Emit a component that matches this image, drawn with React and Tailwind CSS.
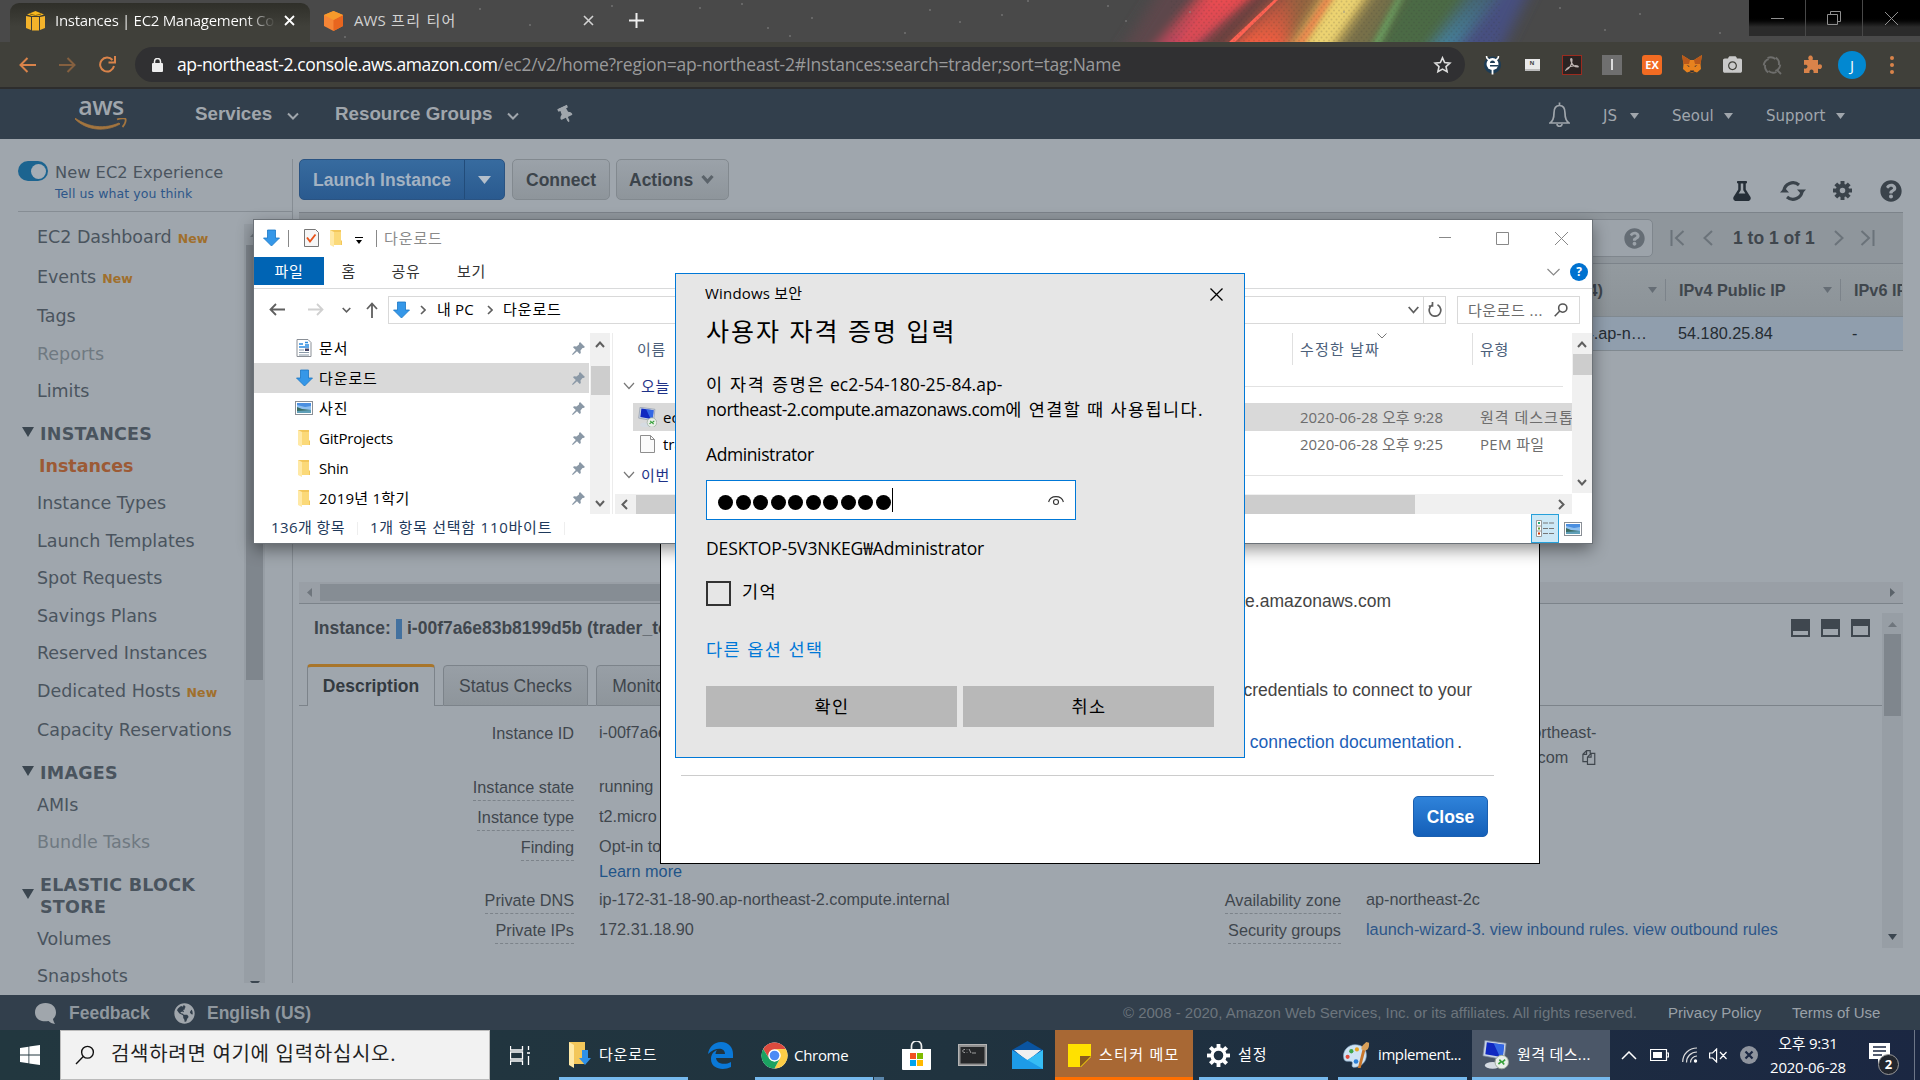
import React from "react";
import {
  FaThumbtack, FaQuestionCircle, FaFlask, FaGlobeAmericas, FaCamera,
} from "react-icons/fa";

const SEGOE = "font-['Open_Sans','Noto_Sans_CJK_KR',sans-serif]";
const ARIAL = "font-['Liberation_Sans',Arial,sans-serif]";
const VERDANA = "font-['DejaVu_Sans',Verdana,sans-serif]";

/* ---------- small drawings ---------- */
const Stroke = ({ d, w = 16, h = 16, c = "currentColor", s = 1.5, vb, className = "" }) => (
  <svg width={w} height={h} viewBox={vb || `0 0 ${w} ${h}`} fill="none" stroke={c} strokeWidth={s} className={`shrink-0 ${className}`}>
    <path d={d} />
  </svg>
);
const Tri = ({ dir = "down", w = 10, h = 6, c = "currentColor", className = "" }) => {
  const p = {
    down: `0,0 ${w},0 ${w / 2},${h}`,
    up: `0,${h} ${w},${h} ${w / 2},0`,
    left: `${w},0 ${w},${h} 0,${h / 2}`,
    right: `0,0 0,${h} ${w},${h / 2}`,
  }[dir];
  return (
    <svg width={w} height={h} className={`shrink-0 ${className}`}>
      <polygon points={p} fill={c} />
    </svg>
  );
};
const DownArrow = () => (
  <svg width="17" height="18" viewBox="0 0 17 18" className="shrink-0">
    <path d="M4.5 1h8v8h4L8.500 17 .5 9h4z" fill="#3597e8" stroke="#1b76c4" strokeWidth=".8" />
  </svg>
);
const Folder = () => (
  <svg width="14" height="18" viewBox="0 0 14 18" className="shrink-0">
    <path d="M1 1h11v10l1 1v4H3z" fill="#f3c75a" />
    <path d="M1 1l4 2v15l-4-2z" fill="#ffe9a6" />
    <path d="M5 3h7v13H5z" fill="#fbd978" />
  </svg>
);
const Picture = () => (
  <svg width="18" height="14" viewBox="0 0 18 14" className="shrink-0">
    <rect x=".5" y=".5" width="17" height="13" fill="#fff" stroke="#8a8f96" />
    <rect x="2" y="2" width="14" height="10" fill="#8fc0f0" />
    <path d="M2 2h14v3l-6 1-8-2z" fill="#4b8fe0" />
    <path d="M2 6l5 2 9 1v3H2z" fill="#3a6b62" />
    <path d="M2 10l14-1v3H2z" fill="#5f9fb8" />
  </svg>
);
const DocIcon = () => (
  <svg width="16" height="18" viewBox="0 0 16 18" className="shrink-0">
    <path d="M1 .5h11l3 3v14H1z" fill="#fff" stroke="#8a8f96" />
    <path d="M3 5h4M9 3.500h3M9 6h4M3 8h10" stroke="#2b8be0" strokeWidth="1.4" />
    <path d="M3 11h5M3 13.500h10M3 16h10" stroke="#8899a8" strokeWidth="1" />
    <rect x="9" y="9.500" width="4" height="2.500" fill="#446" />
  </svg>
);
const Pin = () => (
  <svg width="13" height="13" viewBox="0 0 13 13" className="shrink-0">
    <path d="M8 0l5 5-1.500 1-1 0-2 2.500.3 2.500-1 1L5 9.200.8 13 0 12.200 3.800 8 1 5.200l1-1 2.500.3L7 2.500 7 1.200z" fill="#8a98a6" />
  </svg>
);
const Remote = ({ w = 20 }) => (
  <svg width={w} height={w * 1.1} viewBox="0 0 28 30" className="shrink-0">
    <path d="M3 0l22 3-2 17L1 16z" fill="#c9d4e4" stroke="#7c889c" strokeWidth=".8" />
    <path d="M5 2l18 2.500-1.500 13L3.500 14.500z" fill="#1028c0" />
    <path d="M12 3l11 1.500-1.500 13-3-.5z" fill="#3f7cf0" opacity=".75" />
    <ellipse cx="11" cy="26" rx="8" ry="3.500" fill="#d5dbe2" />
    <circle cx="20.500" cy="22.500" r="7" fill="#e9efe9" stroke="#9aa79a" />
    <path d="M17 24.500l3-2.500-2-2M24 20l-3 2.500 2 2.500" fill="none" stroke="#37a13a" strokeWidth="1.700" />
  </svg>
);
const Magnifier = ({ s = 16, c, sw = 1.6 }) => (
  <svg width={s} height={s} viewBox="0 0 16 16" fill="none" stroke={c} strokeWidth={sw} className="shrink-0">
    <circle cx="10" cy="5.800" r="4.700" />
    <path d="M6.600 9.200L.8 15.200" />
  </svg>
);
const Gear = ({ s, c, teeth, hub }) => (
  <svg width={s} height={s} viewBox="-12 -12 24 24" className="shrink-0">
    {[0, 45, 90, 135, 180, 225, 270, 315].map((a) => <rect key={a} x={-teeth / 2} y="-12" width={teeth} height="6" fill={c} transform={`rotate(${a})`} />)}
    <circle r={(8.500 + hub) / 2} fill="none" stroke={c} strokeWidth={8.500 - hub} />
  </svg>
);

/* ---------- Chrome ---------- */
function Wallpaper() {
  return (
    <svg width="440" height="42" viewBox="0 0 440 42" className="absolute left-[1110px] top-0">
      <defs>
        <filter id="soft" x="-20%" width="140%" y="-50%" height="200%"><feGaussianBlur stdDeviation="8 2" /></filter>
        <filter id="soft2" x="-20%" width="140%" y="-50%" height="200%"><feGaussianBlur stdDeviation="3 1" /></filter>
        <pattern id="hex" width="5" height="6" patternUnits="userSpaceOnUse"><circle cx="1.500" cy="1.500" r="1" fill="#333" opacity=".16" /><circle cx="4" cy="4.500" r="1" fill="#333" opacity=".16" /></pattern>
        <linearGradient id="red" x1="0" y1="0" x2="0" y2="1"><stop offset="0" stopColor="#f04c4e" /><stop offset="1" stopColor="#b54660" /></linearGradient>
        <linearGradient id="org" x1="0" y1="0" x2="0" y2="1"><stop offset="0" stopColor="#9a5540" /><stop offset="1" stopColor="#ff5f42" /></linearGradient>
        <linearGradient id="blu" x1="0" y1="0" x2="0" y2="1"><stop offset="0" stopColor="#44606f" /><stop offset="1" stopColor="#4585a0" /></linearGradient>
      </defs>
      <g filter="url(#soft)">
        <polygon points="50,-10 110,-10 60,52 10,52" fill="#5d464b" />
        <polygon points="98,-10 146,-10 80,52 42,52" fill="url(#red)" />
        <polygon points="146,-10 174,-10 125,52 80,52" fill="#6b4340" />
        <polygon points="172,-10 188,-10 182,52 118,52" fill="url(#org)" />
        <polygon points="184,-10 220,-10 190,52 176,52" fill="#93653f" />
        <polygon points="220,-10 266,-10 222,52 182,52" fill="#e6c866" />
        <polygon points="260,-10 296,-10 262,52 220,52" fill="#787049" />
        <polygon points="292,-10 366,-10 322,52 260,52" fill="#4b6a44" />
        <polygon points="362,-10 398,-10 346,52 318,52" fill="url(#blu)" />
        <polygon points="392,-10 420,-10 390,52 342,52" fill="#474f80" />
      </g>
      <g filter="url(#soft2)">
        <polygon points="108,-4 140,-4 82,46 64,46" fill="#ee4c50" opacity=".5" />
        <polygon points="216,-4 224,-4 193,46 184,46" fill="#f57a48" opacity=".8" />
        <polygon points="228,-4 254,-4 219,46 200,46" fill="#f2da78" opacity=".6" />
        <polygon points="288,-4 293,-4 269,46 262,46" fill="#6fb068" opacity=".85" />
      </g>
      <polygon points="164,0 168,0 125,42 119,42" fill="#ff6252" />
      <rect x="60" width="330" height="42" fill="url(#hex)" />
    </svg>
  );
}

function TabStrip() {
  const stars = [[700, 8], [742, 4], [790, 36], [768, 28], [930, 10], [960, 22], [1002, 15], [905, 33], [812, 18], [1126, 21], [1108, 6], [1560, 8], [1605, 30], [1640, 14], [1720, 33], [480, 9], [530, 25], [612, 6], [345, 37], [1028, 1], [1344, 12], [1190, 12]];
  return (
    <div className={`relative h-[42px] bg-[#494949] flex shrink-0 ${SEGOE}`}>
      <Wallpaper />
      <svg width="1750" height="42" className="absolute left-0 top-0">
        {stars.map(([x, y], i) => <circle key={i} cx={x} cy={y} r=".8" fill="#8d8d8d" />)}
      </svg>
      <div className="relative ml-[10px] mt-[3px] w-[300px] h-[39px] rounded-t-[9px] bg-linear-to-b from-[#2f2f29] to-[#40403a] to-60% flex items-center pb-[4px] text-[15px] text-white">
        <svg width="19" height="20" viewBox="0 0 19 20" className="ml-[16px] shrink-0">
          <path d="M0 5l5 1v13l-5-2zM6 6h7v13.500H6zM14 6l5-1v12l-5 2z" fill="#f3b32b" />
          <path d="M1 3.500L9.500 0 18 3.500 13 5H6z" fill="#f6b71f" /><path d="M4 3l5.500 1.500L15 3" stroke="#8a6510" fill="none" />
        </svg>
        <span className="ml-[10px] w-[221px] shrink-0 overflow-hidden whitespace-nowrap tracking-[-0.3px] bg-linear-to-r from-white from-86% to-transparent bg-clip-text text-transparent">Instances | EC2 Management Co</span>
        <Stroke w={11} h={11} d="M1 1l9 9M10 1l-9 9" s={1.8} className="ml-[8px]" />
      </div>
      <div className="relative w-[300px] h-[42px] flex items-center pb-[1px] text-[15px] text-[#d2d2d2]">
        <svg width="19" height="20" viewBox="0 0 19 20" className="ml-[14px] shrink-0">
          <path d="M9.500 0L19 4v11l-9.500 5L0 15V4z" fill="#f58536" /><path d="M9.500 9L19 4v11l-9.500 5z" fill="#e8651f" /><path d="M9.500 0L19 4 9.500 9 0 4z" fill="#f79a2b" />
        </svg>
        <span className="ml-[11px] w-[229px] whitespace-nowrap tracking-[1.3px]"><span className="tracking-[0.1px]">AWS</span> 프리 티어</span>
        <Stroke w={11} h={11} d="M1 1l9 9M10 1l-9 9" s={1.6} />
      </div>
      <div className="relative w-[52px] flex items-center justify-center pb-[1px]"><Stroke w={15} h={15} d="M7.500 0v15M0 7.500h15" s={2} c="#eee" /></div>
      <div className="relative ml-auto h-[36px] w-[171px] flex bg-linear-to-b from-black from-45% to-[#2b2b2b] to-75% text-[#8f8f8f]">
        <div className="w-[57px] flex items-center justify-center border-r border-[#484848]"><Stroke w={13} h={13} d="M0 6.500h13" s={1} /></div>
        <div className="w-[57px] flex items-center justify-center border-r border-[#484848]"><Stroke w={14} h={14} d="M.5 3.500h10v10h-10zM3.500 3.500v-3h10v10h-3" s={1} /></div>
        <div className="w-[57px] flex items-center justify-center"><Stroke w={13} h={13} d="M0 0l13 13M13 0L0 13" s={1} /></div>
      </div>
    </div>
  );
}

function Toolbar() {
  const o = "#d9834a";
  const box = "w-[40px] shrink-0 flex items-center justify-center";
  return (
    <div className={`h-[47px] shrink-0 bg-[#40403a] border-b-2 border-[#2d2d2d] flex items-center pl-[8px] ${SEGOE}`}>
      <div className={box}><Stroke w={17} h={16} c={o} s={2} d="M17 8H1.500M8.500 1l-7 7 7 7" className="-ml-[2px]" /></div>
      <div className={box}><Stroke w={17} h={16} c="#85603f" s={2} d="M0 8h15.500M8.500 1l7 7-7 7" className="-ml-[2px]" /></div>
      <div className={box}>
        <Stroke w={18} h={17} c={o} s={2} d="M14.500 4A7 7 0 1 0 16 10M17 0v6.500h-6.500" className="-ml-[2px]" />
      </div>
      <div className="ml-[7px] w-[1330px] h-[35px] rounded-full bg-[#303032] flex items-center">
        <svg width="11" height="14" viewBox="0 0 11 14" className="ml-[17px] shrink-0"><rect y="5" width="11" height="9" rx="1" fill="#eee" /><path d="M2.500 5V3.500a3 3 0 0 1 6 0V5" fill="none" stroke="#eee" strokeWidth="1.500" /></svg>
        <span className="ml-[14px] w-[1256px] pb-[1px] shrink-0 whitespace-nowrap text-[17.5px] leading-[24px] tracking-[-0.21px] text-[#9a9a9b]">
          <span className="text-white tracking-[-0.37px]">ap-northeast-2.console.aws.amazon.com</span>/ec2/v2/home?region=ap-northeast-2#Instances:search=trader;sort=tag:Name
        </span>
        <Stroke w={19} h={18} vb="0 0 20 20" s={1.8} c="#ddd" d="M10 2l2.400 5.300 5.800.6-4.300 3.900 1.200 5.700-5.100-2.900-5.100 2.900 1.200-5.700L1.800 7.900l5.800-.6z" />
      </div>
      <div className="ml-[7px] flex">
        <div className={box}><svg width="19" height="20" viewBox="0 0 19 20"><circle cx="9.500" cy="10" r="8.500" fill="#1d3c55" /><path d="M3.500 1c0 2 1 3.500 3 4M15.500 1c0 2-1 3.500-3 4" fill="none" stroke="#fff" strokeWidth="1.500" /><circle cx="9.500" cy="9" r="6" fill="#fff" /><path d="M7 8a2.500 2.500 0 0 1 5 0zM7 10h8.500v1.500H7z" fill="#1d3c55" /><path d="M9.500 14v5.500" stroke="#fff" strokeWidth="1.800" /></svg></div>
        <div className={box}><div className="w-[15px] h-[12px] bg-[#e9e9e9] border-b-2 border-[#bbb] text-[6px] leading-[9px] font-bold text-center text-[#444]">N</div></div>
        <div className={box}><div className="w-[20px] h-[20px] bg-[#2b2322] border border-[#9c2b1f] flex items-center justify-center"><Stroke w={14} h={14} c="#bfb5b3" s={1.2} d="M1 12c4-2 6-6 6-10 0-2-2-2-1 1 1 4 4 6 7 6 1-1-2-2-5-1-3 .5-6 2-7 4z" /></div></div>
        <div className={box}><div className="w-[20px] h-[20px] bg-[#6f6f6f] flex items-center justify-center"><div className="w-[2px] h-[11px] bg-[#ddd]" /></div></div>
        <div className={box}><div className="w-[20px] h-[20px] rounded-[3px] bg-[#f26b22] text-white text-[11px] leading-[20px] font-bold text-center">EX</div></div>
        <div className={box}><svg width="20" height="19" viewBox="0 0 20 19"><path d="M0 0l8 5h4l8-5-1.500 9 .5 5-4 3.500-3-1-1 1.500H9l-1-1.500-3 1L1 14l.5-5z" fill="#e8821e" /><path d="M0 0l8 5-1 4-5.500 0zM20 0l-8 5 1 4 5.500 0z" fill="#b9581a" /><path d="M8 15.500h4l-.5 2h-3z" fill="#2b2b33" /><path d="M4.500 10l3 1-.5 1zM15.500 10l-3 1 .5 1z" fill="#33323a" /></svg></div>
        <div className={box}><FaCamera size={19} color="#c9c9c9" /></div>
        <div className={box}><svg width="20" height="20" viewBox="-10 -10 20 20" fill="none" stroke="#6e6e6c" strokeWidth="1.900">{[0, 60, 120, 180, 240, 300].map((a) => <path key={a} d="M-4.500-7C-1-8.500 3-7.500 5-4" transform={`rotate(${a})`} strokeDasharray="8.500 4" />)}<path d="M5 5l4 4" /></svg></div>
        <div className={box}><svg width="19" height="19" viewBox="0 0 19 19"><path d="M1 5h5c-1.500-2-.5-4.500 1.500-4.500S10.500 3 9.500 5H15v5c2-1.500 4-.5 4 1.500s-2 3.500-4 2V18h-4.500c.5-2-.5-3.500-2-3.500S6 16 6.500 18H1v-4.500c2 .5 3.500-.5 3.500-2S3 9.500 1 10z" fill="#d9834a" /></svg></div>
        <div className={box}><div className="w-[28px] h-[28px] rounded-full bg-[#0288d1] text-white text-[15px] leading-[28px] text-center">J</div></div>
        <div className={`${box} flex-col gap-[3px]`}>{[0, 1, 2].map((i) => <div key={i} className="w-[4px] h-[4px] rounded-full bg-[#d9834a]" />)}</div>
      </div>
    </div>
  );
}

/* ---------- AWS console ---------- */
function AwsHeader() {
  return (
    <div className={`h-[50px] shrink-0 bg-[#323f4c] flex items-center text-[#a0a6ac] ${ARIAL}`}>
      <div className="ml-[75px] w-[52px] h-[34px] flex flex-col items-center">
        <span className="h-[22px] leading-[16px] text-[25px] tracking-[-0.5px] font-['Open_Sans',sans-serif] font-semibold">aws</span>
        <svg width="52" height="13" viewBox="0 0 52 13" className="shrink-0"><path d="M0 0c14 10 30 11 44 5l1 1C31 14 12 13 0 1z" fill="#a3753f" stroke="#a3753f" strokeWidth=".8" /><path d="M42 1.500c4-1.500 8-1.500 8.500-.5s0 5-3 8" fill="none" stroke="#a3753f" strokeWidth="1.800" /></svg>
      </div>
      <span className="ml-[68px] w-[78px] text-[18.75px] font-bold whitespace-nowrap">Services</span>
      <Stroke w={12} h={8} d="M1 1.500l5 5 5-5" s={2} className="ml-[14px] mt-[4px]" />
      <span className="ml-[36px] w-[158px] text-[18.75px] font-bold whitespace-nowrap">Resource Groups</span>
      <Stroke w={12} h={8} d="M1 1.500l5 5 5-5" s={2} className="ml-[14px] mt-[4px]" />
      <FaThumbtack size={17} className="ml-[38px] -rotate-[25deg] shrink-0" />
      <div className={`ml-auto flex items-center pt-[4px] text-[15px] ${VERDANA}`}>
        <svg width="21" height="25" viewBox="0 0 21 25" fill="none" stroke="currentColor" strokeWidth="1.700" className="shrink-0 -mt-[3px]"><path d="M1 21c3-2 4-4.500 4-10C5 6 7 3.500 10.500 3.500S16 6 16 11c0 5.500 1 8 4 10zM10.500 3.500V.5M8 22a2.500 2.300 0 0 0 5 0" /></svg>
        <span className="ml-[33px] w-[19px]">JS</span><Tri w={9} h={6} className="ml-[8px]" />
        <span className="ml-[33px] w-[44px]">Seoul</span><Tri w={9} h={6} className="ml-[8px]" />
        <span className="ml-[33px] w-[62px]">Support</span><Tri w={9} h={6} className="ml-[8px] mr-[75px]" />
      </div>
    </div>
  );
}

const NAV = [
  ["EC2 Dashboard", "mt-[13px]", "new"], ["Events", "mt-[16px]", "new"], ["Tags", "mt-[15px]"], ["Reports", "mt-[14px]", "dim"], ["Limits", "mt-[13px]"],
  ["INSTANCES", "mt-[19px]", "head"], ["Instances", "mt-[8px]", "active"], ["Instance Types", "mt-[13px]"], ["Launch Templates", "mt-[14px]"],
  ["Spot Requests", "mt-[13px]"], ["Savings Plans", "mt-[14px]"], ["Reserved Instances", "mt-[13px]"], ["Dedicated Hosts", "mt-[14px]", "new"],
  ["Capacity Reservations", "mt-[15px]"], ["IMAGES", "mt-[19px]", "head"], ["AMIs", "mt-[8px]"], ["Bundle Tasks", "mt-[13px]", "dim"],
  ["ELASTIC BLOCK STORE", "mt-[20px]", "head2"], ["Volumes", "mt-[9px]"], ["Snapshots", "mt-[13px]"],
];

function Sidebar() {
  return (
    <div className={`w-[293px] h-[844px] shrink-0 flex flex-col overflow-hidden text-[#4a545e] ${VERDANA}`}>
      <div className="mt-[20px] h-[53px] border-r border-[#868d94] flex flex-col">
        <div className="ml-[18px] h-[53px] border-b border-[#868d94] flex">
          <div className="mt-[2px] w-[30px] h-[20px] rounded-full bg-[#1c6490] flex items-center justify-end pr-[2px]"><div className="w-[15px] h-[15px] rounded-full bg-[#a5adb5]" /></div>
          <div className="ml-[7px] whitespace-nowrap">
            <div className="h-[26px] leading-[27px] text-[16.25px]">New EC2 Experience</div>
            <div className="h-[18px] leading-[17px] text-[12.5px] tracking-[0.08px] text-[#2d5689]">Tell us what you think</div>
          </div>
        </div>
      </div>
      <div className="flex-1 min-h-0 border-r border-[#868d94] flex">
        <div className="w-[244px] flex flex-col overflow-hidden whitespace-nowrap text-[17.5px]">
          {NAV.map(([t, mt, k]) => {
            if (k === "head" || k === "head2")
              return (
                <div key={t} className={`${mt} shrink-0 flex items-center pl-[22px] font-bold ${k === "head" ? "h-[24px]" : "h-[44px]"}`}>
                  <Tri w={12} h={10} c="#3b4650" className="mb-[4px]" />
                  <span className="ml-[6px] w-[180px] whitespace-normal leading-[22px] tracking-[0.25px]">{t}</span>
                </div>
              );
            const c = k === "active" ? "font-bold text-[#9c5a35] pl-[39px]" : k === "dim" ? "text-[#6f7981] pl-[37px]" : "pl-[37px]";
            return (
              <div key={t} className={`${mt} shrink-0 h-[24px] leading-[24px] tracking-[-0.02px] ${c}`}>
                {t}{k === "new" && <span className="ml-[6px] text-[12.5px] font-bold tracking-[0.1px] text-[#a06f2c]">New</span>}
              </div>
            );
          })}
        </div>
        <div className="mt-[12px] w-[21px] bg-[#979ea5] flex flex-col items-center overflow-hidden">
          <Tri dir="up" w={9} h={5} c="#6f767d" className="mt-[8px]" />
          <div className="mt-[8px] w-[17px] h-[435px] shrink-0 bg-[#7f868d]" />
          <Tri dir="down" w={10} h={6} c="#3b4650" className="mt-[301px]" />
        </div>
      </div>
    </div>
  );
}

const greyBtn = "border border-[#82898f] bg-linear-to-b from-[#9ba2a9] to-[#8e959b] rounded-[5px] text-[#3c444b] flex items-center";

function Detail({ label, value, dash = true, lw, link, className = "" }) {
  return (
    <div className={`flex ${className}`}>
      <div className={`${lw} flex justify-end`}>
        <span className={`h-[27px] leading-[26px] ${dash ? "border-b border-dashed border-[#7c838a]" : ""}`}>{label}</span>
      </div>
      <div className={`ml-[25px] whitespace-nowrap leading-[25px] ${link ? "text-[#2d5689]" : ""}`}>{value}</div>
    </div>
  );
}

function PanelIcon({ inner }) {
  return <div className="w-[19px] h-[18px] bg-[#3f474f] flex items-end p-[2px]"><div className={`w-[15px] bg-[#9fa6ad] ${inner}`} /></div>;
}

function Main() {
  return (
    <div className={`ml-[6px] w-[1604px] flex flex-col ${ARIAL} text-[17.5px] text-[#3f464d]`}>
      <div className="mt-[20px] h-[53px] flex">
        <div className="w-[206px] h-[41px] rounded-[5px] border border-[#2a5382] bg-linear-to-b from-[#376b9f] to-[#2a5a8f] flex font-bold text-[#a3b2c2]">
          <div className="w-[165px] flex items-center pl-[13px] pt-[1px] border-r border-[#224c7a]">Launch Instance</div>
          <div className="flex-1 flex items-center justify-center pt-[1px]"><Tri w={13} h={8} c="#b4bfcb" /></div>
        </div>
        <div className={`ml-[7px] w-[98px] h-[41px] pt-[1px] justify-center font-bold ${greyBtn}`}>Connect</div>
        <div className={`ml-[6px] w-[113px] h-[41px] pl-[12px] pt-[1px] font-bold ${greyBtn}`}>Actions<Stroke w={13} h={10} d="M1.500 2l5 5.500 5-5.500" s={3.2} c="#5b636a" className="ml-[8px] mb-[2px]" /></div>
        <div className="ml-auto flex items-center h-[63px] text-[#3a434b]">
          <FaFlask size={20} className="w-[20px] text-[#252e37]" />
          <svg width="26" height="22" viewBox="0 0 26 22" className="ml-[28px]"><path d="M4 11a9 8.500 0 0 1 15-6M22 11a9 8.500 0 0 1-15 6" fill="none" stroke="currentColor" strokeWidth="3.200" /><path d="M0 12.500l4.500-5 4.500 5zM17 9.500l4.500 5 4.500-5z" fill="currentColor" /></svg>
          <span className="ml-[27px]"><Gear s={19} c="#3a434b" teeth={5} hub={3.5} /></span>
          <FaQuestionCircle size={22} className="ml-[28px] mr-[1px]" />
        </div>
      </div>
      <div className="h-[51px] border-t border-[#7c838a] bg-[#8f969c] flex items-center">
        <div className="w-[1345px] ml-[9px] h-[38px] rounded-[5px] border border-[#7f868d] bg-[#9ca3aa] flex items-center justify-end"><FaQuestionCircle size={21} color="#656d75" className="mr-[7px]" /></div>
        <div className="ml-[17px] flex items-center text-[#6b737a]">
          <Stroke w={15} h={16} d="M1.500 0v16M13.500 1l-7.500 7 7.500 7" s={2} />
          <Stroke w={10} h={16} d="M9 1L1.500 8 9 15" s={2} className="ml-[18px]" />
          <span className="ml-[20px] w-[82px] shrink-0 whitespace-nowrap font-bold text-[#3f464d]">1 to 1 of 1</span>
          <Stroke w={10} h={16} d="M1 1l7.500 7L1 15" s={2} className="ml-[19px]" />
          <Stroke w={15} h={16} d="M1.500 1L9 8l-7.500 7M13.500 0v16" s={2} className="ml-[16px]" />
        </div>
      </div>
      <div className="h-[53px] border-t border-[#7c838a] bg-linear-to-b from-[#939a9f] to-[#8c9398] flex items-center text-[16.25px] font-bold whitespace-nowrap overflow-hidden">
        <span className="w-[1304px] shrink-0 text-right">Public DNS (IPv4)</span>
        <Tri w={9} h={6} c="#656d75" className="ml-[45px]" />
        <div className="ml-[8px] w-[1px] h-[22px] shrink-0 bg-[#7c838a]" />
        <span className="ml-[13px] w-[144px] shrink-0">IPv4 Public IP</span>
        <Tri w={9} h={6} c="#656d75" />
        <div className="ml-[8px] w-[1px] h-[22px] shrink-0 bg-[#7c838a]" />
        <span className="ml-[13px] w-[48px] shrink-0 overflow-hidden">IPv6 IPs</span>
      </div>
      <div className="h-[35px] border-y border-[#808990] bg-[#909ead] flex items-center text-[16.25px] text-[#252c33] whitespace-nowrap">
        <span className="w-[1348px] shrink-0 text-right">ec2-54-180-25-84.ap-n…</span>
        <span className="ml-[31px] w-[174px]">54.180.25.84</span><span>-</span>
      </div>
      <div className="mt-[231px] h-[22px] border-b border-[#7c838a] bg-[#999fa6] flex items-center">
        <Tri dir="left" w={5} h={9} c="#6f767d" className="ml-[8px]" />
        <div className="ml-[8px] w-[1000px] h-[17px] bg-[#868d94]" />
        <Tri dir="right" w={5} h={9} c="#5b636a" className="ml-auto mr-[8px]" />
      </div>
      <div className="h-[379px] flex">
        <div className="w-[1583px] flex flex-col">
          <div className="h-[60px] pb-[11px] pl-[15px] flex items-center font-bold whitespace-nowrap">
            <span className="w-[82px]">Instance:</span>
            <div className="w-[6px] h-[20px] bg-[#43719f] mr-[5px]" />i-00f7a6e83b8199d5b (trader_test)
            <div className="ml-auto mr-[12px] mb-[2px] flex gap-[11px]"><PanelIcon inner="h-[4px]" /><PanelIcon inner="h-[6px]" /><PanelIcon inner="h-[9px]" /></div>
          </div>
          <div className="h-[42px] flex items-end">
            <div className="w-[8px] self-stretch border-b border-[#7c838a]" />
            <div className="w-[128px] h-[42px] rounded-t-[4px] border-x border-t-[3px] border-x-[#7c838a] border-t-[#a8752a] flex items-center justify-center font-bold text-[#333a40]">Description</div>
            <div className="w-[8px] self-stretch border-b border-[#7c838a]" />
            <div className="w-[145px] h-[41px] pt-[1px] rounded-t-[4px] border border-[#7c838a] bg-linear-to-b from-[#989fa6] to-[#8e959b] flex items-center justify-center">Status Checks</div>
            <div className="w-[8px] self-stretch border-b border-[#7c838a]" />
            <div className="w-[114px] h-[41px] pt-[1px] rounded-t-[4px] border border-[#7c838a] bg-linear-to-b from-[#989fa6] to-[#8e959b] flex items-center justify-center">Monitoring</div>
            <div className="flex-1 self-stretch border-b border-[#7c838a]" />
          </div>
          <div className="flex text-[16.25px] whitespace-nowrap">
            <div className="w-[767px] pt-[14px]">
              <Detail lw="w-[275px]" label="Instance ID" value="i-00f7a6e83b8199d5b" dash={false} />
              <Detail lw="w-[275px]" className="mt-[27px]" label="Instance state" value="running" />
              <Detail lw="w-[275px]" className="mt-[3px]" label="Instance type" value="t2.micro" />
              <Detail lw="w-[275px]" className="mt-[3px]" label="Finding" value={<>Opt-in to AWS Compute<div className="text-[#1f5488]">Learn more</div></>} />
              <Detail lw="w-[275px]" className="mt-[3px]" label="Private DNS" value="ip-172-31-18-90.ap-northeast-2.compute.internal" />
              <Detail lw="w-[275px]" className="mt-[3px]" label="Private IPs" value="172.31.18.90" />
            </div>
            <div className="flex-1 pt-[14px]">
              <Detail lw="w-[275px]" label="Public DNS" dash={false} value={<div className="w-[230px]"><div className="text-right">ec2-54-180-25-84.ap-northeast-</div><div className="flex items-center justify-end">2.compute.amazonaws.com<svg width="15" height="17" viewBox="0 0 15 17" fill="none" stroke="#3f464d" strokeWidth="1.300" className="ml-[14px]"><path d="M6 13H1V5l4-4h4v3M5 1v4H1M6 8l4-4h4v12H6zM10 4v4H6" /></svg></div></div>} />
              <Detail lw="w-[275px]" className="mt-[117px]" label="Availability zone" value="ap-northeast-2c" />
              <Detail lw="w-[275px]" className="mt-[3px]" label="Security groups" link value="launch-wizard-3. view inbound rules. view outbound rules" />
            </div>
          </div>
        </div>
        <div className="mt-[9px] w-[21px] h-[335px] bg-[#979ea5] flex flex-col items-center">
          <Tri dir="up" w={9} h={5} c="#6f767d" className="mt-[9px]" />
          <div className="mt-[7px] w-[17px] h-[82px] bg-[#7f868d]" />
          <Tri w={9} h={6} c="#3b4650" className="mt-auto mb-[8px]" />
        </div>
      </div>
    </div>
  );
}

function AwsFooter() {
  return (
    <div className={`h-[35px] shrink-0 bg-[#323f4c] flex items-center pt-[2px] text-[#8f979e] whitespace-nowrap ${ARIAL}`}>
      <svg width="22" height="22" viewBox="0 0 22 22" className="ml-[35px] shrink-0"><path d="M10.500 0C17 0 21 4 21 9.500c0 3-1.500 5-3 6.500.3 2 1.500 4 2 5-3-.3-5-1.500-6.500-3C6 19.500 0 16 0 9.500 0 4 4 0 10.500 0z" fill="#a0a6ac" /></svg>
      <span className="ml-[12px] w-[81px] text-[17.5px] font-bold">Feedback</span>
      <FaGlobeAmericas size={21} className="ml-[24px] shrink-0" color="#a0a6ac" />
      <span className="ml-[12px] text-[17.5px] font-bold">English (US)</span>
      <span className="ml-auto text-[15px] text-[#6c757d]">© 2008 - 2020, Amazon Web Services, Inc. or its affiliates. All rights reserved.</span>
      <span className="ml-[31px] w-[94px] text-[15px] text-[#9aa1a8]">Privacy Policy</span>
      <span className="ml-[30px] mr-[40px] w-[88px] text-[15px] text-[#9aa1a8]">Terms of Use</span>
    </div>
  );
}

/* ---------- connect modal ---------- */
function ConnectModal() {
  return (
    <div className={`absolute left-[660px] top-[300px] w-[880px] h-[564px] bg-white border border-black flex flex-col text-[17.5px] text-[#444] whitespace-nowrap ${ARIAL}`}>
      <div className="mt-[287px] h-[26px] leading-[26px] w-[730px] text-right">ec2-54-180-25-84.ap-northeast-2.compute.amazonaws.com</div>
      <div className="mt-[63px] h-[26px] leading-[26px] w-[811px] text-right">When prompted, use the following credentials to connect to your</div>
      <div className="mt-[26px] h-[26px] leading-[26px] w-[801px] text-right">please see our <span className="text-[#1c60b8]">connection documentation</span><span className="ml-[3px]">.</span></div>
      <div className="ml-[20px] mt-[20px] w-[813px] h-[1px] bg-[#ccc]" />
      <div className="ml-[752px] mt-[20px] w-[75px] h-[41px] pt-[1px] rounded-[5px] border border-[#1a5fb0] bg-linear-to-b from-[#2f83da] to-[#145fb8] text-white font-bold flex items-center justify-center">Close</div>
    </div>
  );
}

/* ---------- Explorer ---------- */
const TREE = [["문서", <DocIcon />], ["다운로드", <DownArrow />], ["사진", <Picture />], ["GitProjects", <Folder />], ["Shin", <Folder />], ["2019년 1학기", <Folder />]];

function Explorer() {
  const g = "#5f5f5f";
  return (
    <div className={`absolute left-[254px] top-[220px] w-[1338px] h-[323px] bg-white shadow-[0_0_0_1px_#6c7278,0_6px_16px_rgba(0,0,0,0.45)] flex flex-col text-[15px] leading-[22px] text-black whitespace-nowrap ${SEGOE}`}>
      <div className="h-[36px] flex items-center">
        <div className="ml-[9px]"><DownArrow /></div>
        <div className="ml-[8px] w-[1px] h-[17px] bg-[#888]" />
        <svg width="15" height="18" viewBox="0 0 15 18" className="ml-[15px]"><path d="M.5.5h11l3 3v14H.5z" fill="#f6f6f6" stroke="#777" /><path d="M3 8.500l3 4 5.500-7" fill="none" stroke="#e8531a" strokeWidth="1.900" /></svg>
        <div className="ml-[10px]"><Folder /></div>
        <svg width="8" height="7" className="ml-[12px] mt-[4px]"><path d="M0 .5h8" stroke="#000" /><path d="M1 3h6L4 7z" /></svg>
        <div className="ml-[13px] w-[1px] h-[17px] bg-[#888]" />
        <span className="ml-[7px] tracking-[0.9px] text-[#8a8a8a]">다운로드</span>
        <div className="ml-auto flex items-center pr-[24px] text-[#888]">
          <Stroke w={12} h={12} d="M0 5.500h12" s={1} />
          <Stroke w={13} h={13} d="M.5.5h12v12h-12z" s={1} className="ml-[45px]" />
          <Stroke w={13} h={13} d="M0 0l13 13M13 0L0 13" s={1} className="ml-[46px]" />
        </div>
      </div>
      <div className="mt-[1px] h-[32px] border-b border-[#d9dadb] flex text-[#333]">
        <div className="w-[70px] h-[28px] bg-[#0064b4] text-white flex items-center justify-center tracking-[0.8px]">파일</div>
        <div className="w-[49px] h-[28px] flex items-center justify-center">홈</div>
        <div className="w-[66px] h-[28px] flex items-center justify-center tracking-[0.8px]">공유</div>
        <div className="w-[65px] h-[28px] flex items-center justify-center tracking-[0.8px]">보기</div>
        <Stroke w={13} h={8} d="M.5 1l6 6 6-6" s={1.2} c="#888" className="ml-auto mt-[11px]" />
        <div className="ml-[10px] mr-[4px] mt-[6px] w-[18px] h-[18px] rounded-full bg-[#0072d0] text-white text-[12px] leading-[18px] text-center font-bold">?</div>
      </div>
      <div className="h-[44px] flex items-center pb-[3px]">
        <Stroke w={16} h={13} d="M16 6.500H1.500M7 1L1.500 6.500 7 12" s={1.8} c={g} className="ml-[15px]" />
        <Stroke w={16} h={13} d="M0 6.500h14.500M9 1l5.500 5.500L9 12" s={1.8} c="#d0d0d0" className="ml-[23px]" />
        <Stroke w={9} h={6} d="M.7 1l3.800 3.800L8.300 1" s={1.6} c={g} className="ml-[18px]" />
        <Stroke w={12} h={16} d="M6 16V1.500M1 7l5-5.500L11 7" s={1.8} c={g} className="ml-[15px]" />
        <div className="ml-[10px] w-[1058px] shrink-0 h-[28px] border border-[#d9d9d9] flex items-center">
          <div className="ml-[4px]"><DownArrow /></div>
          <Stroke w={6} h={10} d="M1 1l4 4-4 4" s={1.6} c={g} className="ml-[10px]" />
          <span className="ml-[11px] w-[42px] pb-[1px] tracking-[0.2px]">내 PC</span>
          <Stroke w={6} h={10} d="M1 1l4 4-4 4" s={1.6} c={g} className="ml-[8px]" />
          <span className="ml-[10px] pb-[1px] tracking-[0.9px]">다운로드</span>
          <Stroke w={11} h={8} d="M.7 1l4.800 5.500L10.300 1" s={1.8} c={g} className="ml-auto mr-[4px]" />
          <div className="w-[22px] h-[26px] border-l border-[#d9d9d9] flex items-center justify-center"><Stroke w={14} h={15} d="M4.500 2.800A5.800 6 0 1 0 9.500 2.800M4.500 0v4H.8" s={1.7} c={g} /></div>
        </div>
        <div className="ml-[11px] w-[123px] h-[28px] border border-[#d9d9d9] flex items-center pl-[10px] tracking-[0.5px] text-[#6b6b6b]">다운로드 ...<span className="ml-auto mr-[11px] flex"><Magnifier s={14} c="#555" sw={1.8} /></span></div>
      </div>
      <div className="h-[181px] flex">
        <div className="w-[335px]">
          {TREE.map(([t, ic], i) => (
            <div key={t} className={`h-[30px] flex items-center ${i === 1 ? "bg-[#d9d9d9]" : ""}`}>
              <div className="ml-[40px] w-[20px] flex justify-center">{ic}</div>
              <span className={`ml-[5px] pb-[1px] ${i > 2 && i < 5 ? "tracking-[-0.2px]" : i === 5 ? "tracking-[0.25px]" : "tracking-[0.9px]"}`}>{t}</span>
              <div className="ml-auto mr-[4px]"><Pin /></div>
            </div>
          ))}
        </div>
        <div className="ml-[1px] w-[20px] bg-[#f0f0f0] flex flex-col items-center">
          <Stroke w={10} h={7} d="M1 6l4-4.500L9 6" s={2} c={g} className="mt-[8px]" />
          <div className="mt-[18px] w-[19px] h-[29px] bg-[#cdcdcd]" />
          <Stroke w={10} h={7} d="M1 1l4 4.500L9 1" s={2} c={g} className="mt-auto mb-[7px]" />
        </div>
        <div className="ml-[2px] w-[1px] bg-[#ececec]" />
        <div className="w-[959px] flex flex-col">
          <div className="h-[32px] flex items-center text-[#4c607a]">
            <span className="ml-[24px] w-[655px] tracking-[0.6px]">이름</span>
            <div className="w-[1px] h-[32px] bg-[#e0e0e0]" />
            <span className="ml-[7px] w-[83px] tracking-[1.2px]">수정한 날짜</span>
            <Stroke w={10} h={6} d="M.5.5L5 5 9.500.5" s={1} c="#777" className="mb-[26px] -ml-[6px]" />
            <div className="ml-[85px] w-[1px] h-[32px] bg-[#e0e0e0]" />
            <span className="ml-[7px] tracking-[0.8px]">유형</span>
          </div>
          <div className="mt-[9px] h-[24px] flex items-center text-[#1e3287]">
            <Stroke w={12} h={8} d="M1 1l5 5.500L11 1" s={1.2} c="#777" className="ml-[10px]" />
            <span className="ml-[6px] tracking-[0.6px]">오늘</span><div className="ml-[10px] mr-[9px] flex-1 h-[1px] bg-[#e2e2e2]" />
          </div>
          <div className="mt-[5px] ml-[20px] h-[28px] bg-[#d9d9d9] flex items-center text-[#6d6d6d] overflow-hidden">
            <div className="ml-[5px]"><Remote w={19} /></div>
            <span className="ml-[6px] w-[637px] shrink-0 text-black">ec2-54-180-25-84</span>
            <span className="w-[180px] shrink-0 tracking-[-0.02px]">2020-06-28 오후 9:28</span><span className="tracking-[1px]">원격 데스크톱 연결</span>
          </div>
          <div className="ml-[20px] h-[28px] pb-[2px] flex items-center text-[#6d6d6d]">
            <svg width="15" height="18" className="ml-[7px] mr-[2px] shrink-0"><path d="M.5.500h10l4 4v13H.5z" fill="#fbfbfb" stroke="#8e8e8e" /><path d="M10.500.5v4h4" fill="none" stroke="#8e8e8e" /></svg>
            <span className="ml-[6px] w-[637px] shrink-0 text-black">trader.pem</span>
            <span className="w-[180px] shrink-0 tracking-[-0.02px]">2020-06-28 오후 9:25</span><span className="tracking-[0.35px]">PEM 파일</span>
          </div>
          <div className="mt-[4px] h-[24px] flex items-center text-[#1e3287]">
            <Stroke w={12} h={8} d="M1 1l5 5.500L11 1" s={1.2} c="#777" className="ml-[10px]" />
            <span className="ml-[6px] tracking-[0.8px]">이번&nbsp;&nbsp;주</span><div className="ml-[10px] mr-[9px] flex-1 h-[1px] bg-[#e2e2e2]" />
          </div>
          <div className="mt-auto ml-[2px] h-[20px] bg-[#f0f0f0] flex items-center">
            <Stroke w={7} h={11} d="M6 1L1.500 5.500 6 10" s={2} c={g} className="ml-[6px]" />
            <div className="ml-[8px] w-[779px] h-[19px] bg-[#cdcdcd]" />
            <Stroke w={7} h={11} d="M1 1l4.500 4.500L1 10" s={2} c={g} className="ml-auto mr-[7px]" />
          </div>
        </div>
        <div className="w-[20px] h-[160px] bg-[#f0f0f0] flex flex-col items-center">
          <Stroke w={10} h={7} d="M1 6l4-4.500L9 6" s={2} c={g} className="mt-[8px]" />
          <div className="mt-[6px] w-[19px] h-[21px] bg-[#cdcdcd]" />
          <Stroke w={10} h={7} d="M1 1l4 4.500L9 1" s={2} c={g} className="mt-auto mb-[7px]" />
        </div>
      </div>
      <div className="h-[29px] flex items-center text-[#1e395b]">
        <span className="ml-[17px] w-[86px] pb-[3px] tracking-[0.4px]">136개 항목</span><div className="w-[1px] h-[13px] bg-[#eee]" />
        <span className="ml-[12px] w-[194px] pb-[3px] tracking-[0.75px]">1개 항목 선택함 110바이트</span><div className="w-[1px] h-[13px] bg-[#eee]" />
        <div className="ml-auto w-[28px] h-[29px] bg-[#cce8f6] border border-[#26a0da] flex items-center justify-center">
          <svg width="18" height="17" viewBox="0 0 18 17"><path d="M.5.500h5v16h-5zM.5 6h5M.5 11h5" fill="#fff" stroke="#999" /><path d="M7 3h5M13 3h5M7 8.500h5M13 8.500h5M7 13.500h5M13 13.500h5" stroke="#777" /><path d="M2 3h2" stroke="#2a7" strokeWidth="2" /><path d="M2 8.500h2" stroke="#693" strokeWidth="2" /><path d="M2 13.500h2" stroke="#c30" strokeWidth="2" /></svg>
        </div>
        <div className="ml-[5px] mr-[10px]"><Picture /></div>
      </div>
    </div>
  );
}

/* ---------- credentials dialog ---------- */
function Credentials() {
  return (
    <div className={`absolute left-[675px] top-[273px] w-[570px] h-[485px] bg-[#e6e6e6] border border-[#0078d7] pl-[30px] flex flex-col text-black whitespace-nowrap text-[17.5px] ${SEGOE}`}>
      <div className="h-[38px] -ml-[1px] flex items-center">
        <span className="text-[15px] tracking-[0.2px]">Windows 보안</span>
        <Stroke w={13} h={13} d="M.5.5l12 12M12.500.5l-12 12" s={1.3} className="ml-auto mr-[21px] mt-[2px]" />
      </div>
      <div className="mt-[1px] h-[36px] leading-[36px] text-[25px] tracking-[2px]">사용자 자격 증명 입력</div>
      <div className="mt-[23px] h-[25px] leading-[25px] tracking-[0.05px]"><span className="tracking-[1.7px]">이 자격 증명은</span> ec2-54-180-25-84.ap-</div>
      <div className="h-[25px] leading-[24px] tracking-[-0.43px]">northeast-2.compute.amazonaws.com<span className="tracking-[1.4px]">에 연결할 때 사용됩니다.</span></div>
      <div className="mt-[20px] h-[25px] leading-[25px] tracking-[-0.4px]">Administrator</div>
      <div className="mt-[13px] w-[370px] h-[40px] shrink-0 bg-white border border-[#0078d7] flex items-center pl-[11px]">
        <div className="flex gap-[2.500px] pt-[4px]">{Array.from({ length: 10 }, (_, i) => <div key={i} className="w-[15px] h-[15px] rounded-full bg-black" />)}</div>
        <div className="ml-[1px] w-[1px] h-[24px] bg-black" />
        <svg width="16" height="11" viewBox="0 0 16 11" fill="none" stroke="#333" strokeWidth="1.100" className="ml-auto mr-[11px]"><path d="M.6 7a7.600 7 0 0 1 14.800 0" /><circle cx="8" cy="7" r="2.500" /></svg>
      </div>
      <div className="mt-[16px] h-[25px] leading-[25px] tracking-[-0.12px]">DESKTOP-5V3NKEG₩Administrator</div>
      <div className="mt-[19px] h-[26px] flex items-center">
        <div className="w-[25px] h-[25px] border-2 border-[#333]" /><span className="ml-[11px] pb-[3px] tracking-[1.5px]">기억</span>
      </div>
      <div className="mt-[30px] h-[26px] leading-[26px] tracking-[1.5px] text-[#0078d7]">다른 옵션 선택</div>
      <div className="mt-[24px] h-[41px] flex gap-[6px] tracking-[1.4px]">
        <div className="w-[251px] pl-[1px] bg-[#b8b8b8] flex items-center justify-center">확인</div>
        <div className="w-[251px] pl-[1px] bg-[#b8b8b8] flex items-center justify-center">취소</div>
      </div>
    </div>
  );
}

/* ---------- taskbar ---------- */
const Task = ({ w, bg = "", bar = "border-[#76b9ed]", icon, text, className = "" }) => (
  <div className={`h-[50px] shrink-0 ${w} ${bg} border-b-[3px] ${bar} flex items-center pt-[3px] ${className}`}>
    {icon}<span className="ml-[8px] pb-[1px]">{text}</span>
  </div>
);

function Taskbar() {
  return (
    <div className={`h-[50px] shrink-0 bg-linear-to-r from-[#22373f] via-[#20333f] to-[#1b2742] flex items-center text-white text-[15px] whitespace-nowrap ${SEGOE}`}>
      <svg width="20" height="20" viewBox="0 0 20 20" className="ml-[20px] shrink-0"><path d="M0 3l8.500-1.300v7.800H0zM9.300 1.500L20 0v9.500H9.300zM0 10.400h8.500v7.800L0 17zM9.300 10.400H20V20L9.300 18.400z" fill="#fff" /></svg>
      <div className="ml-[20px] w-[430px] h-[50px] shrink-0 bg-[#f2f2f2] border border-[#bbb] flex items-center text-[#222] text-[20px]">
        <span className="ml-[14px] w-[21px]"><Magnifier s={20} c="#111" sw={1.1} /></span>
        <span className="ml-[15px] pb-[2px] tracking-[0.7px]">검색하려면 여기에 입력하십시오.</span>
      </div>
      <Stroke w={21} h={19} d="M.5 0v4h12V0M.5 6h12v7h-12zM.5 19v-4h12v4M18.500 0v4M18.500 10v9M17 7h3" s={1.3} className="ml-[20px]" />
      <Task className="ml-[28px] pl-[10px] tracking-[0.8px]" w="w-[129px]" text="다운로드" icon={<svg width="22" height="26" viewBox="0 0 22 26" className="shrink-0"><path d="M0 0h16v22H4z" fill="#f3c75a" /><path d="M0 0l5 3v23l-5-3z" fill="#ffe9a6" /><path d="M13 8h6v8h3l-6 7-6-7h3z" fill="#2f90e6" /></svg>} />
      <svg width="25" height="27" viewBox="0 0 25 27" className="ml-[20px] shrink-0"><path d="M0 12C1 5 6 0 13 0c8 0 12 6 12 12v4H8c.5 6 9 7.500 15 4v5c-8 4-20 2-20-8 0-5 3-8 6-9-1 1.500-1.500 3-1.500 4h9.500c0-7-10-7-17 0z" fill="#0a78d7" /></svg>
      <div className="ml-[22px] w-[129px] h-[50px] shrink-0 flex flex-col">
        <div className="h-[47px] pt-[3px] pl-[6px] flex items-center">
          <svg width="27" height="27" viewBox="-14 -14 28 28" className="shrink-0"><circle r="13.500" fill="#fff" /><path d="M-11.700-6.800A13.500 13.500 0 0 1 11.700-6.800L0-6.500A6.500 6.500 0 0 0-5.600 3.200z" fill="#dd4b3e" /><path d="M11.700-6.800A13.500 13.500 0 0 1 0 13.500L5.600 3.200A6.500 6.500 0 0 0 0-6.500z" fill="#fdcd46" /><path d="M0 13.500A13.500 13.500 0 0 1-11.700-6.800L-5.600 3.200A6.500 6.500 0 0 0 5.600 3.200z" fill="#1ba261" /><circle r="6" fill="#fff" /><circle r="5" fill="#4c8bf5" /></svg>
          <span className="ml-[6px] tracking-[-0.3px]">Chrome</span>
        </div>
        <div className="h-[3px] flex"><div className="w-[118px] bg-[#76b9ed]" /><div className="ml-[1px] w-[10px] bg-[#5b87ac]" /></div>
      </div>
      <svg width="29" height="29" viewBox="0 0 29 29" className="ml-[18px] shrink-0"><path d="M9.500 9V5a5 5 0 0 1 10 0v4" fill="none" stroke="#eee" strokeWidth="1.700" /><path d="M0 8h29v20a1 1 0 0 1-1 1H1a1 1 0 0 1-1-1z" fill="#fff" /><path d="M8 12h6v6H8z" fill="#f25022" /><path d="M15 12h6v6h-6z" fill="#7fba00" /><path d="M8 19h6v6H8z" fill="#00a4ef" /><path d="M15 19h6v6h-6z" fill="#ffb900" /></svg>
      <svg width="29" height="22" viewBox="0 0 29 22" className="ml-[27px] shrink-0"><rect x=".5" y=".5" width="28" height="21" fill="#8f8f8f" stroke="#b4b4b4" /><rect x="2.500" y="3" width="24" height="16.500" fill="#26282a" /><path d="M7 5.500c-3-.5-3 3.500 0 3M9 5.500v.6M9 8v.6M11 5l2 4M14 9h4" stroke="#aaa" strokeWidth=".9" fill="none" /></svg>
      <svg width="31" height="28" viewBox="0 0 31 28" className="ml-[25px] shrink-0"><path d="M0 9L15.500 0 31 9v5H0z" fill="#0a54a0" /><path d="M2 9h27L15.500 20z" fill="#f0f0f0" /><path d="M0 9l15.500 10L31 9v19H0z" fill="#1d9be8" /><path d="M15.500 19L31 9v19z" fill="#36bdf5" /></svg>
      <Task className="ml-[12px] pl-[13px] tracking-[1.3px]" w="w-[138px]" bg="bg-[#a86834]" bar="border-[#ff6f00]" text="스티커 메모" icon={<svg width="23" height="23" viewBox="0 0 23 23" className="shrink-0"><path d="M0 0h23v13L13 23H0z" fill="#ffe100" /><path d="M12 12h11L12 23z" fill="#8a5a1e" /></svg>} />
      <Task className="ml-[6px] pl-[8px] tracking-[0.9px]" w="w-[129px]" text="설정" icon={<Gear s={23} c="#fff" teeth={4} hub={5} />} />
      <Task className="ml-[10px] pl-[4px] tracking-[-0.4px]" w="w-[129px]" text="implement..." icon={<svg width="28" height="28" viewBox="0 0 30 28" className="shrink-0"><path d="M2 18C0 10 6 3 14 3s13 5 12 13-9 12-14 11c-3-1 1-5-2-6s-7 1-8-3z" fill="#cfe3f3" stroke="#86a8c4" strokeWidth=".7" /><circle cx="6" cy="16" r="2.200" fill="#e04a3a" /><circle cx="10" cy="10" r="2.300" fill="#3fa54a" /><circle cx="16" cy="8" r="2.200" fill="#e8a21e" /><circle cx="15" cy="21" r="2.500" fill="#2b7fd6" /><path d="M22 8l3 1-5 19-3 0z" fill="#c8762a" /><path d="M21 8c-1-3 2-5 5-8l3 1c0 4 0 7-4 8.500z" fill="#d9a15a" /></svg>} />
      <Task className="ml-[5px] pl-[10px] tracking-[0.35px]" w="w-[138px]" bg="bg-[#4b5768]" text="원격 데스..." icon={<Remote w={27} />} />
      <Stroke w={16} h={9} d="M1 8l7-7 7 7" s={1.500} className="ml-[11px]" />
      <svg width="19" height="12" viewBox="0 0 19 12" className="ml-[13px] shrink-0"><path d="M.5.500h16v11H.5zM17 4h1.500v4H17" fill="none" stroke="#fff" strokeWidth="1.200" /><rect x="3" y="3" width="9" height="6" fill="#fff" /></svg>
      <svg width="16" height="16" viewBox="0 0 16 16" fill="none" stroke="#ddd" strokeWidth="1.200" className="ml-[13px] shrink-0"><path d="M.7 15C.7 7 7 1 15 1M4.500 15.500C4.500 9.500 9 5 15 5M8.500 15.500c0-3.500 3-6.500 6.500-6.500" /><circle cx="13.500" cy="14" r="1.700" fill="#fff" stroke="none" /></svg>
      <svg width="19" height="15" viewBox="0 0 19 15" fill="none" stroke="#fff" strokeWidth="1.200" className="ml-[11px] shrink-0"><path d="M.6 5h3l4-4v13l-4-4h-3zM11 4l6.500 7M17.500 4L11 11" /></svg>
      <svg width="18" height="18" viewBox="0 0 18 18" className="ml-[12px] shrink-0"><circle cx="9" cy="9" r="9" fill="#8f949e" /><path d="M5.500 5.500l7 7M12.500 5.500l-7 7" stroke="#1b2742" strokeWidth="2.200" /></svg>
      <div className="ml-[8px] w-[84px] text-center leading-[24px] pb-[1px] tracking-[-0.25px]"><div>오후 9:31</div><div>2020-06-28</div></div>
      <div className="relative ml-[19px] w-[32px] h-[32px] shrink-0">
        <svg width="21" height="21" viewBox="0 0 21 21" className="mt-[4px]"><path d="M0 0h21v16h-7l-5 5v-5H0z" fill="#fff" /><path d="M4 4h13M4 8h13M4 12h9" stroke="#1b2742" strokeWidth="1.500" /></svg>
        <div className="absolute left-[9px] top-[15px] w-[21px] h-[21px] rounded-full bg-[#22262e] border border-[#999] text-[13px] leading-[19px] font-bold text-center">2</div>
      </div>
      <div className="ml-auto mr-[5px] w-[1px] h-[50px] bg-[#6d7688]" />
    </div>
  );
}

export default function App() {
  return (
    <div className="relative w-[1920px] h-[1080px] overflow-hidden flex flex-col bg-[#9fa6ad]">
      <TabStrip />
      <Toolbar />
      <AwsHeader />
      <div className="h-[856px] shrink-0 flex overflow-hidden">
        <Sidebar />
        <Main />
      </div>
      <AwsFooter />
      <Taskbar />
      <ConnectModal />
      <Explorer />
      <Credentials />
    </div>
  );
}
